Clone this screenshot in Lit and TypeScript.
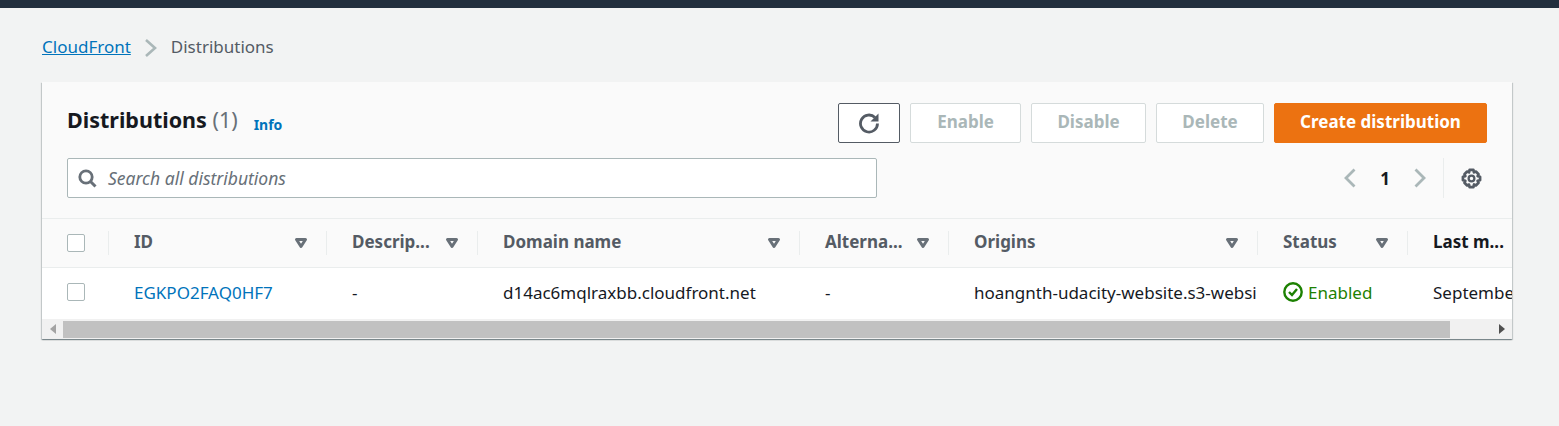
import { LitElement, html, css } from 'lit'
import { customElement } from 'lit/decorators.js'

const columns = [
  { label: 'ID', width: 218 },
  { label: 'Descrip...', width: 151 },
  { label: 'Domain name', width: 322 },
  { label: 'Alterna...', width: 149 },
  { label: 'Origins', width: 309 },
  { label: 'Status', width: 150 },
  { label: 'Last m...', width: 300, noSort: true }
]

const sortIcon = html`<svg class="sort" width="14" height="12" viewBox="0 0 14 12"><path d="M2.500 2.500h9L7 9.500z" fill="none" stroke="#687078" stroke-width="3" stroke-linejoin="round"/></svg>`

@customElement('app-root')
export class AppRoot extends LitElement {
  static styles = css`
    :host {
      display: block;
      height: 426px;
      overflow: hidden;
      background: #f2f3f3;
      font-family: "Noto Sans", sans-serif;
      font-size: 17px;
      color: #16191f;
    }
    .topbar { height: 8px; background: #232f3e; }
    .page { padding: 0 47px 0 42px; }
    .crumbs {
      display: flex;
      align-items: center;
      height: 74px;
      padding-top: 2px;
      box-sizing: border-box;
      color: #545b64;
    }
    .crumbs a { color: #0073bb; text-decoration: underline; }
    .crumbs svg { margin: 4px 13px 0 13px; }
    .card {
      background: #fff;
      box-shadow: 0 1px 1px 0 rgba(0,28,36,.3), 1px 1px 1px 0 rgba(0,28,36,.15), -1px 1px 1px 0 rgba(0,28,36,.15);
    }
    .head {
      background: #fafafa;
      height: 137px;
      box-sizing: border-box;
      padding: 21px 25px 0;
      border-bottom: 1px solid #eaeded;
    }
    .row1 { display: flex; align-items: center; height: 40px; }
    h1 { margin: 0 0 6px; font-size: 21.500px; font-weight: 700; line-height: 34px; }
    h1 span { font-weight: 400; color: #687078; }
    .info { margin: 2px auto 0 16px; font-size: 14px; font-weight: 700; color: #0073bb; }
    .btn {
      height: 40px;
      box-sizing: border-box;
      margin-left: 10px;
      padding-bottom: 3px;
      display: flex;
      align-items: center;
      justify-content: center;
      border: 1px solid #d5dbdb;
      border-radius: 2px;
      background: #fff;
      color: #aab7b8;
      font-weight: 700;
    }
    .refresh { width: 62px; border-color: #545b64; margin-left: 0; padding-bottom: 0; }
    .enable { width: 111px; }
    .disable { width: 115px; margin-left: 10px; }
    .delete { width: 108px; }
    .create { width: 213px; background: #ec7211; border-color: #ec7211; color: #fff; }
    .row2 { display: flex; align-items: center; margin-top: 15px; height: 40px; }
    .search {
      width: 810px;
      height: 40px;
      box-sizing: border-box;
      border: 1px solid #aab7b8;
      border-radius: 2px;
      background: #fff;
      display: flex;
      align-items: center;
      padding-left: 10px;
      font-style: italic;
      font-size: 17.500px;
      color: #687078;
    }
    .search svg { margin-right: 11px; }
    .pager { margin-left: auto; margin-right: 5px; display: flex; align-items: center; }
    .pager .num { width: 58px; text-align: center; font-weight: 700; font-size: 17px; }
    .pager .sep { width: 1px; height: 40px; background: #eaeded; margin: 0 17px; }
    .table { overflow: hidden; }
    .thead, .trow { display: flex; }
    .thead {
      height: 49px;
      background: #fafafa;
      border-bottom: 1px solid #eaeded;
      box-sizing: border-box;
      font-weight: 700;
      color: #545b64;
    }
    .trow { height: 51px; box-sizing: border-box; padding-bottom: 3px; }
    .check {
      flex: none;
      width: 66px;
      display: flex;
      align-items: center;
      padding-left: 25px;
      box-sizing: border-box;
    }
    .box {
      width: 18px;
      height: 18px;
      box-sizing: border-box;
      border: 1px solid #aab7b8;
      border-radius: 2px;
      background: #fff;
    }
    .th {
      flex: none;
      box-sizing: border-box;
      display: flex;
      align-items: center;
      padding: 0 18px 3px 26px;
      position: relative;
      white-space: nowrap;
    }
    .th::before {
      content: '';
      position: absolute;
      left: 0;
      top: 12px;
      height: 24px;
      width: 1px;
      background: #eaeded;
    }
    .th .sort { margin-left: auto; margin-top: 3px; }
    .th.dark { color: #16191f; }
    .td {
      flex: none;
      box-sizing: border-box;
      padding: 0 0 0 26px;
      display: flex;
      align-items: center;
      overflow: hidden;
      white-space: nowrap;
    }
    .td a { color: #0073bb; }
    .ok { color: #1d8102; gap: 5px; }
    .scroll {
      height: 20px;
      background: #f1f1f1;
      display: flex;
      align-items: center;
    }
    .arrow { flex: none; width: 21px; display: flex; justify-content: center; }
    .track { flex: 1; height: 17px; }
    .thumb { height: 17px; width: 1387px; background: #c1c1c1; }
  `

  render () {
    const widths = columns.map((c) => c.width)
    const cells = [
      html`<a>EGKPO2FAQ0HF7</a>`,
      '-',
      'd14ac6mqlraxbb.cloudfront.net',
      '-',
      'hoangnth-udacity-website.s3-websi',
      html`<svg width="20" height="20" viewBox="0 0 20 20"><circle cx="10" cy="10" r="8.700" fill="none" stroke="#1d8102" stroke-width="2.400"/><path d="M6 10l3 3 5-6" fill="none" stroke="#1d8102" stroke-width="2.400"/></svg>Enabled`,
      'Septembe'
    ]
    return html`
      <div class="topbar"></div>
      <div class="page">
        <nav class="crumbs">
          <a>CloudFront</a>
          <svg width="14" height="20" viewBox="0 0 14 20"><path d="M2 2l9 8-9 8" fill="none" stroke="#aab7b8" stroke-width="2.600"/></svg>
          <span>Distributions</span>
        </nav>
        <section class="card">
          <div class="head">
            <div class="row1">
              <h1>Distributions <span>(1)</span></h1>
              <a class="info">Info</a>
              <div class="btn refresh">
                <svg width="22" height="22" viewBox="0 0 22 22"><path d="M17 5.500A8.500 8.500 0 1 0 19.500 11.500" fill="none" stroke="#545b64" stroke-width="2.800"/><path d="M20.500 1.500v8h-8z" fill="#545b64"/></svg>
              </div>
              <div class="btn enable">Enable</div>
              <div class="btn disable">Disable</div>
              <div class="btn delete">Delete</div>
              <div class="btn create">Create distribution</div>
            </div>
            <div class="row2">
              <div class="search">
                <svg width="19" height="19" viewBox="0 0 19 19"><circle cx="8" cy="8" r="6.200" fill="none" stroke="#687078" stroke-width="2.800"/><path d="M12.500 12.500l5 5" stroke="#687078" stroke-width="3"/></svg>
                Search all distributions
              </div>
              <div class="pager">
                <svg width="12" height="20" viewBox="0 0 12 20"><path d="M10.500 1.500L2 10l8.500 8.500" fill="none" stroke="#aab7b8" stroke-width="2.800"/></svg>
                <span class="num">1</span>
                <svg width="12" height="20" viewBox="0 0 12 20"><path d="M1.500 1.500L10 10l-8.500 8.500" fill="none" stroke="#aab7b8" stroke-width="2.800"/></svg>
                <span class="sep"></span>
                <svg width="21" height="21" viewBox="0 0 22 22"><path d="M9 2h4l.6 2.600 2-.9 2.800 2.800-1 2 2.600.600v3.800l-2.600.600 1 2-2.800 2.800-2-1-.6 2.700H9l-.6-2.700-2 1-2.800-2.800 1-2L2 12.900V9.100l2.600-.6-1-2 2.800-2.800 2 .9z" fill="none" stroke="#545b64" stroke-width="2.800" stroke-linejoin="round"/><circle cx="11" cy="11" r="3" fill="none" stroke="#545b64" stroke-width="2.400"/></svg>
              </div>
            </div>
          </div>
          <div class="table">
            <div class="thead">
              <div class="check"><div class="box"></div></div>
              ${columns.map((c) => html`<div class="th ${c.noSort ? 'dark' : ''}" style="width:${c.width}px">${c.label}${c.noSort ? '' : sortIcon}</div>`)}
            </div>
            <div class="trow">
              <div class="check"><div class="box"></div></div>
              ${cells.map((cell, i) => html`<div class="td ${i === 5 ? 'ok' : ''}" style="width:${widths[i]}px">${cell}</div>`)}
            </div>
          </div>
          <div class="scroll">
            <div class="arrow"><svg width="6" height="10" viewBox="0 0 6 10"><path d="M6 0v10L0 5z" fill="#a3a3a3"/></svg></div>
            <div class="track"><div class="thumb"></div></div>
            <div class="arrow"><svg width="6" height="10" viewBox="0 0 6 10"><path d="M0 0v10l6-5z" fill="#505050"/></svg></div>
          </div>
        </section>
      </div>
    `
  }
}
